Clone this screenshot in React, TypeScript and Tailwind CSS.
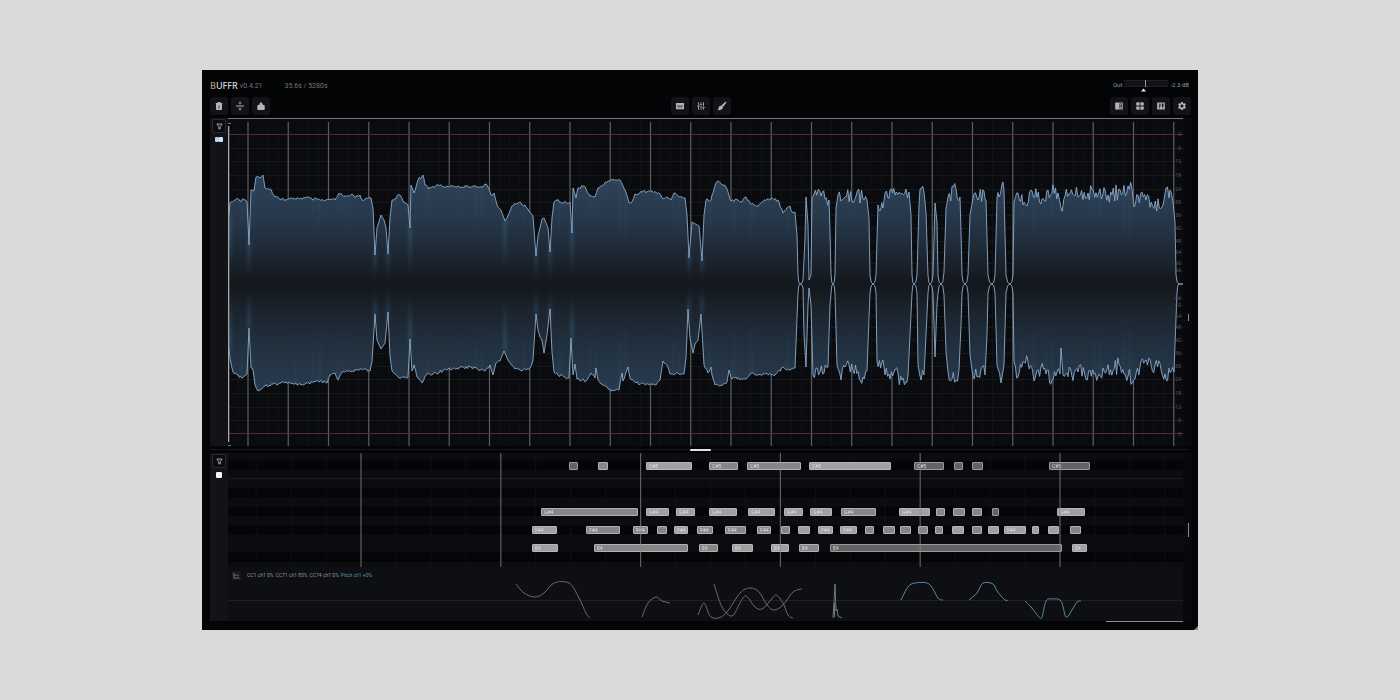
import type { ReactNode } from 'react';
import { MdSettings, MdTune, MdWindow } from 'react-icons/md';

type Point = [number, number];

const WAVE_W = 955;
const WAVE_H = 328;
const MID = 166;
const ROLL_H = 114;
const CC_H = 54;
const KEY_H = 9.2;

// upper edge of the waveform, in chart units
const upper: Point[] = [
  [0, 108], [2, 85], [7, 82], [17, 82], [19, 84], [21, 127], [23, 72], [26, 73], [28, 59], [32, 60], [35, 57], [37, 70],
  [42, 71], [47, 79], [57, 82], [77, 80], [80, 79], [84, 81], [107, 82], [111, 75], [117, 78], [124, 76], [128, 79],
  [132, 77], [134, 82], [138, 80], [143, 80], [145, 90], [147, 137], [149, 110], [153, 97], [156, 102], [158, 110],
  [160, 136], [162, 100], [164, 82], [172, 77], [175, 83], [180, 87], [182, 110], [183, 67], [186, 75], [190, 62],
  [195, 57], [197, 67], [201, 71], [210, 67], [220, 69], [254, 69], [257, 66], [260, 69], [263, 77], [266, 75],
  [269, 87], [273, 92], [277, 103], [279, 100], [284, 88], [290, 85], [297, 87], [302, 94], [305, 98], [308, 138],
  [310, 118], [312, 110], [314, 101], [316, 100], [318, 105], [320, 110], [322, 134], [324, 100], [326, 84], [329, 82],
  [334, 85], [342, 84], [344, 115], [345, 70], [348, 80], [350, 70], [356, 68], [362, 78], [367, 79], [370, 70],
  [380, 63], [385, 61], [392, 62], [397, 72], [401, 85], [404, 84], [407, 76], [414, 74], [424, 73], [432, 76],
  [434, 80], [440, 80], [443, 82], [446, 75], [454, 79], [457, 80], [459, 97], [461, 140], [464, 104], [471, 108],
  [474, 143], [476, 97], [478, 82], [483, 82], [485, 75], [488, 65], [490, 63], [498, 69], [503, 83], [510, 82],
  [514, 84], [518, 79], [522, 85], [530, 88], [539, 81], [550, 82], [555, 95], [562, 88], [564, 94], [567, 94],
  [569, 117], [570, 157], [572, 166], [575, 162], [577, 120], [578, 79], [580, 107], [581, 162], [583, 157], [584, 80],
  [586, 76], [593, 78], [601, 82], [602, 114], [603, 157], [605, 166], [607, 157], [608, 90], [610, 77], [617, 79],
  [628, 78], [639, 82], [641, 100], [642, 157], [645, 166], [648, 157], [650, 87], [655, 90], [657, 75], [660, 80],
  [662, 72], [667, 77], [678, 71], [681, 74], [683, 97], [684, 157], [686, 166], [689, 157], [691, 87], [692, 71],
  [696, 74], [698, 94], [700, 157], [702, 166], [705, 157], [707, 85], [709, 104], [710, 157], [713, 166], [716, 154],
  [718, 90], [720, 79], [728, 71], [732, 79], [733, 114], [734, 157], [737, 166], [740, 157], [742, 97], [745, 80],
  [750, 82], [756, 73], [758, 82], [760, 157], [764, 166], [767, 157], [769, 80], [771, 79], [774, 66], [776, 72],
  [778, 157], [782, 166], [785, 157], [786, 84], [790, 75], [795, 87], [799, 88], [804, 73], [814, 81], [820, 72],
  [830, 75], [833, 90], [837, 78], [860, 75], [880, 77], [904, 71], [906, 89], [914, 74], [918, 82], [934, 89],
  [938, 70], [941, 80], [943, 74], [945, 84], [947, 104], [948, 157], [951, 166], [955, 166],
];

// lower edge of the waveform
const lower: Point[] = [
  [0, 224], [2, 240], [5, 254], [14, 260], [19, 256], [21, 210], [23, 250], [25, 252], [27, 267], [30, 273], [37, 268],
  [57, 265], [77, 266], [92, 263], [99, 265], [102, 257], [107, 255], [110, 262], [114, 254], [123, 254], [133, 251],
  [142, 253], [144, 244], [147, 196], [149, 222], [153, 231], [157, 225], [160, 194], [162, 238], [164, 253],
  [172, 260], [180, 259], [182, 221], [184, 253], [186, 247], [189, 259], [194, 265], [198, 257], [205, 256],
  [220, 251], [242, 249], [257, 253], [262, 247], [265, 257], [268, 245], [272, 243], [276, 233], [280, 242],
  [287, 251], [295, 252], [302, 250], [305, 242], [308, 196], [310, 212], [312, 219], [314, 222], [316, 235],
  [319, 217], [322, 191], [324, 234], [326, 254], [330, 257], [341, 260], [343, 220], [345, 257], [347, 246],
  [349, 261], [358, 263], [363, 255], [367, 260], [368, 250], [370, 262], [375, 267], [383, 273], [391, 272],
  [394, 255], [395, 263], [400, 249], [402, 260], [408, 265], [428, 267], [432, 262], [435, 243], [439, 247],
  [442, 256], [456, 256], [458, 240], [460, 191], [462, 220], [465, 235], [467, 226], [470, 222], [473, 196],
  [476, 247], [480, 255], [483, 249], [484, 257], [487, 267], [493, 267], [499, 264], [501, 252], [503, 260],
  [518, 261], [522, 256], [547, 257], [555, 249], [562, 252], [567, 250], [569, 200], [570, 175], [572, 166],
  [575, 170], [576, 217], [578, 249], [580, 187], [581, 170], [583, 187], [585, 257], [592, 254], [600, 249],
  [602, 187], [603, 175], [605, 166], [607, 175], [609, 247], [613, 262], [617, 249], [625, 253], [635, 259],
  [639, 253], [641, 200], [642, 175], [645, 166], [648, 175], [649, 244], [655, 242], [657, 257], [666, 254],
  [674, 262], [680, 258], [682, 217], [684, 175], [686, 166], [689, 175], [690, 247], [693, 262], [696, 257],
  [698, 217], [700, 175], [702, 166], [705, 175], [707, 239], [709, 187], [710, 175], [713, 166], [716, 177],
  [718, 234], [720, 254], [728, 262], [731, 252], [733, 207], [734, 175], [737, 166], [740, 175], [742, 237],
  [745, 259], [753, 251], [757, 257], [759, 217], [760, 175], [764, 166], [767, 175], [769, 247], [773, 265],
  [776, 247], [778, 175], [782, 166], [785, 175], [786, 244], [790, 259], [796, 244], [800, 244], [806, 263],
  [813, 249], [818, 256], [824, 262], [829, 254], [832, 256], [833, 230], [835, 257], [850, 254], [870, 258],
  [885, 253], [891, 246], [896, 256], [907, 261], [912, 249], [927, 247], [937, 256], [946, 254], [948, 200],
  [949, 175], [951, 166], [955, 166],
];

// narrow dips with a soft glow between their two tips
const dips: Point[] = [
  [2, 105], [21, 127], [147, 137], [160, 136], [182, 110], [277, 103], [308, 138], [322, 134], [344, 115], [461, 140], [474, 143],
];

const dbMarks: [number, string][] = [
  [16, '0'], [30, '-6'], [43, '-12'], [57, '-18'], [71, '-24'], [84, '-30'],
  [97, '-36'], [110, '-42'], [123, '-48'], [134, '-54'], [145, '-60'], [152, '-66'],
];

const beats = Array.from({ length: 24 }, (_, i) => 20 + i * 40.25);
const bars = Array.from({ length: 6 }, (_, i) => 133 + i * 139.8);

const random = (n: number) => {
  const s = Math.sin(n * 127.1) * 43758.5453;
  return (s - Math.floor(s)) * 2 - 1;
};

// walks along the envelope, roughens its flat parts and rounds off the silences
const roughen = (points: Point[], seed: number): string => {
  const out: string[] = [];
  for (let i = 0; i < points.length - 1; i++) {
    const [x1, y1] = points[i];
    const [x2, y2] = points[i + 1];
    const loud = Math.abs(y1 - MID) > 70 && Math.abs(y2 - MID) > 70;
    const flat = Math.abs(y2 - y1) / (x2 - x1) < 6;
    const amount = loud && flat ? (x1 > 584 ? 8 : 1.4) : 0;
    out.push(`${x1},${y1}`);
    if (y2 === MID && y1 !== MID) {
      out.push(`${x1 + (x2 - x1) * 0.4},${MID + (y1 - MID) * 0.2}`);
      continue;
    }
    if (y1 === MID && y2 !== MID) {
      out.push(`${x1 + (x2 - x1) * 0.6},${MID + (y2 - MID) * 0.2}`);
      continue;
    }
    const steps = Math.max(1, Math.round((x2 - x1) / 1.3));
    for (let k = 1; k < steps; k++) {
      const x = x1 + ((x2 - x1) * k) / steps;
      const y = y1 + ((y2 - y1) * k) / steps + random(x + seed) * amount;
      out.push(`${x.toFixed(1)},${y.toFixed(1)}`);
    }
  }
  const last = points[points.length - 1];
  out.push(`${last[0]},${last[1]}`);
  return out.join(' ');
};

const smooth = (points: Point[]) => {
  let d = `M${points[0][0]} ${points[0][1]}`;
  for (let i = 0; i < points.length - 1; i++) {
    const p0 = points[i - 1] ?? points[i];
    const p1 = points[i];
    const p2 = points[i + 1];
    const p3 = points[i + 2] ?? p2;
    d += ` C${p1[0] + (p2[0] - p0[0]) / 6} ${p1[1] + (p2[1] - p0[1]) / 6} ${p2[0] - (p3[0] - p1[0]) / 6} ${p2[1] - (p3[1] - p1[1]) / 6} ${p2[0]} ${p2[1]}`;
  }
  return d;
};

const upperLine = roughen(upper, 3);
const lowerLine = roughen(lower, 11);

// [start, end, tone]
type Note = [number, number, 'dark' | 'mid' | 'light'];

const noteRows: { name: string; key: number; notes: Note[] }[] = [
  {
    name: 'C#5',
    key: 1,
    notes: [
      [341, 350, 'dark'], [370, 380, 'mid'], [418, 464, 'light'], [481, 510, 'mid'], [519, 573, 'mid'], [581, 663, 'light'],
      [686, 716, 'dark'], [726, 735, 'dark'], [744, 755, 'dark'], [821, 862, 'dark'],
    ],
  },
  {
    name: 'G#4',
    key: 6,
    notes: [
      [313, 410, 'mid'], [418, 441, 'light'], [448, 467, 'light'], [481, 509, 'light'], [520, 547, 'light'], [556, 575, 'light'],
      [582, 604, 'light'], [613, 648, 'mid'], [671, 702, 'light'], [708, 717, 'mid'], [725, 737, 'mid'], [744, 754, 'mid'],
      [764, 771, 'dark'], [829, 857, 'light'],
    ],
  },
  {
    name: 'F#4',
    key: 8,
    notes: [
      [304, 329, 'light'], [358, 392, 'mid'], [405, 420, 'mid'], [429, 439, 'mid'], [446, 460, 'light'], [469, 485, 'mid'],
      [497, 518, 'mid'], [529, 543, 'mid'], [553, 562, 'mid'], [570, 582, 'light'], [590, 605, 'light'], [612, 629, 'light'],
      [637, 646, 'mid'], [655, 667, 'mid'], [672, 683, 'mid'], [690, 700, 'mid'], [707, 715, 'mid'], [724, 736, 'light'],
      [744, 754, 'mid'], [760, 771, 'light'], [776, 798, 'light'], [804, 811, 'light'], [820, 831, 'light'], [842, 853, 'mid'],
    ],
  },
  {
    name: 'E4',
    key: 10,
    notes: [
      [304, 330, 'light'], [366, 460, 'mid'], [471, 490, 'mid'], [504, 525, 'light'], [543, 561, 'light'], [571, 591, 'mid'],
      [602, 834, 'dark'], [844, 859, 'light'],
    ],
  },
];

const noteTone = {
  dark: 'border-[#9a9a9c] bg-[#636365]',
  mid: 'border-[#b2b2b4] bg-[#868688]',
  light: 'border-[#b8b8ba] bg-[#a0a0a2]',
};

const blackKeys = [1, 4, 6, 8, 11];

const greyCurves: Point[][] = [
  [[288, 17], [296, 26], [307, 30], [316, 26], [326, 16], [341, 16], [350, 29], [358, 46], [362, 51]],
  [[414, 50], [420, 36], [428, 30], [434, 34], [442, 36]],
  [[470, 48], [476, 36], [482, 49], [490, 51], [499, 45], [512, 26], [522, 21], [531, 25], [539, 38], [546, 43], [555, 38], [565, 25], [574, 22]],
  [[486, 17], [494, 40], [504, 49], [512, 36], [518, 29], [527, 40], [534, 42], [542, 34], [548, 28], [555, 36], [560, 48], [565, 51]],
];

const blueCurves: Point[][] = [
  [[673, 33], [680, 20], [687, 16], [701, 17], [710, 31], [715, 33]],
  [[741, 33], [749, 26], [755, 16], [765, 17], [769, 24], [777, 33], [780, 33]],
  [[797, 34], [803, 40], [811, 50], [814, 50], [818, 34], [824, 32], [833, 34], [838, 50], [844, 43], [849, 35], [853, 34]],
];

const ToolButton = ({ label, children }: { label: string; children: ReactNode }) => (
  <button
    type="button"
    aria-label={label}
    className="flex size-[18px] items-center justify-center rounded-[3px] bg-[#121317] text-[10px] text-[#b4b4b6]"
  >
    {children}
  </button>
);

const Glyph = ({ children }: { children: ReactNode }) => (
  <svg viewBox="0 0 10 10" className="size-[10px]" fill="currentColor">
    {children}
  </svg>
);

const FilterButton = ({ label }: { label: string }) => (
  <button
    type="button"
    aria-label={label}
    className="flex size-[14px] items-center justify-center rounded-[2px] border border-[#292a2e] bg-[#0b0c0f]"
  >
    <svg viewBox="0 0 8 8" className="size-[7px]" fill="none" stroke="#b8b8ba" strokeWidth="1">
      <path d="M1 1.2h6L4.8 4.2v2.6h-1.6V4.2z" />
    </svg>
  </button>
);

const Header = () => (
  <header className="flex flex-col gap-[3px] pr-[7px] pl-2">
    <div className="flex h-4 items-center justify-between pr-[2px]">
      <div className="flex items-center text-[7px] text-[#77787a]">
        <h1 className="font-['Noto_Sans',sans-serif] text-[9px] font-medium text-[#d6d6d8]">
          <span className="text-[#b79a5c]">B</span>UFFR
        </h1>
        <span className="ml-[2px]">v0.4.21</span>
        <span className="ml-[22px]">35.6s / 5280s</span>
      </div>
      <div className="flex h-4 items-start gap-[2px] text-[6px] text-[#9b9b9d]">
        <label htmlFor="output" className="leading-[14px]">Out</label>
        <div className="relative mt-[2px] h-[7px] w-[44px] rounded-[1px] bg-[#111216]">
          <input id="output" type="range" min={-60} max={60} defaultValue={-2.3} className="absolute inset-0 h-full w-full opacity-0" />
          <svg viewBox="0 0 44 12" className="pointer-events-none h-[12px] w-[44px]">
            <path d="M0 .5h44M0 6.500h44" stroke="#1d1f23" />
            <path d="M21.500 0v7" stroke="#9a9a9c" />
            <path d="M17 11.500 19.500 8.500 22 11.500z" fill="#f0f0f0" />
          </svg>
        </div>
        <output className="leading-[14px]">-2.3 dB</output>
      </div>
    </div>
    <nav className="grid grid-cols-3">
      <div className="flex gap-[3px]">
        <ToolButton label="Clear">
          <Glyph>
            <path d="M3.500 1h3v1h1.800v1H1.700V2h1.800z" />
            <path fillRule="evenodd" d="M2 3h6v5.300a.7.7 0 0 1-.7.7H2.700a.7.7 0 0 1-.7-.7zM4 4.500v3.200h.3V4.500zM5.700 4.500v3.200H6V4.500z" />
          </Glyph>
        </ToolButton>
        <ToolButton label="Fit height">
          <Glyph>
            <path d="M1 4.600h8v.8H1zM5 .4l1.500 1.900H5.400v1.200h-.8V2.300H3.500zM5 9.600 3.500 7.700h1.100V6.500h.8v1.200h1.100z" />
          </Glyph>
        </ToolButton>
        <ToolButton label="Export">
          <Glyph>
            <path d="M2 4h6a.7.7 0 0 1 .7.7v3.600a.7.7 0 0 1-.7.7H2a.7.7 0 0 1-.7-.7V4.700A.7.7 0 0 1 2 4z" />
            <path d="M3.200 4.200V3L5 1l1.800 2v1.200z" />
          </Glyph>
        </ToolButton>
      </div>
      <div className="flex justify-center gap-[3px]">
        <ToolButton label="Info">
          <Glyph>
            <path fillRule="evenodd" d="M1 2h8v6.300H1zM2.200 4.200v.6h1.300v-.6zM4.300 4.200v.6h1.300v-.6zM6.400 4.200v.6h1.300v-.6zM2.200 5.600v.6h5.500v-.6z" />
          </Glyph>
        </ToolButton>
        <ToolButton label="Mixer"><MdTune className="rotate-90" /></ToolButton>
        <ToolButton label="Brush">
          <Glyph>
            <path d="M9.100 1c.4.3.4.700.1 1L6.200 5.800 4.500 4.300 8.200 1c.2-.3.600-.3.900 0z" />
            <path d="M4 4.400c1.200.1 2 .9 2 1.900C5.700 8.400 3.500 9.500.8 9.200c.9-.7.500-1.900 1.100-3.100.4-.9 1.100-1.600 2.100-1.700z" />
          </Glyph>
        </ToolButton>
      </div>
      <div className="flex justify-end gap-[3px]">
        <ToolButton label="Side panel">
          <Glyph>
            <path fillRule="evenodd" d="M1.200 1.500h7.600v7H1.200zM5.400 2.500v5h2.500v-5z" />
            <path d="M5.800 3.200h1.600v.9H5.800zM5.800 4.600h1.600v.9H5.800zM5.800 6h1.600v.9H5.800z" />
          </Glyph>
        </ToolButton>
        <ToolButton label="Grid"><MdWindow /></ToolButton>
        <ToolButton label="Piano roll">
          <Glyph>
            <path fillRule="evenodd" d="M1.200 1.500h7.600v7H1.200zM3.300 2.500v2.700h-.6v.6h.7v2h.5v-2h.6V2.500zM5.900 2.500v3.300h.5v2h.5v-2h.6V2.500z" />
          </Glyph>
        </ToolButton>
        <ToolButton label="Settings"><MdSettings /></ToolButton>
      </div>
    </nav>
  </header>
);

const Waveform = () => (
  <svg viewBox={`0 0 ${WAVE_W} ${WAVE_H}`} preserveAspectRatio="none" className="absolute inset-0 h-full w-full">
    <defs>
      <linearGradient id="body" gradientUnits="userSpaceOnUse" x1="0" y1="56" x2="0" y2="276">
        <stop offset="0" stopColor="#30435a" />
        <stop offset=".2" stopColor="#27384a" />
        <stop offset=".36" stopColor="#1d2733" />
        <stop offset=".5" stopColor="#14171c" />
        <stop offset=".64" stopColor="#1c252f" />
        <stop offset=".8" stopColor="#223140" />
        <stop offset="1" stopColor="#293b4f" />
      </linearGradient>
      <linearGradient id="glow" x1="0" y1="0" x2="0" y2="1">
        <stop offset="0" stopColor="#4f87b8" stopOpacity=".3" />
        <stop offset=".4" stopColor="#4f87b8" stopOpacity="0" />
        <stop offset=".6" stopColor="#4f87b8" stopOpacity="0" />
        <stop offset="1" stopColor="#4f87b8" stopOpacity=".3" />
      </linearGradient>
      <filter id="soften" x="-5%" y="-5%" width="110%" height="110%">
        <feGaussianBlur stdDeviation="1.6 4" />
      </filter>
      <clipPath id="shape">
        <polygon points={`${upperLine} ${lowerLine.split(' ').reverse().join(' ')}`} />
      </clipPath>
    </defs>

    {Array.from({ length: 95 }, (_, i) => (
      <path key={i} d={`M${i * 10.06 + 10} 4V${WAVE_H}`} stroke="#101216" />
    ))}
    {dbMarks.slice(1).map(([y]) => (
      <path key={y} d={`M0 ${y + 0.5}H${WAVE_W}M0 ${2 * MID - y + 0.5}H${WAVE_W}`} stroke="#16181c" />
    ))}
    {beats.map((x) => (
      <path key={x} d={`M${x} 4V${WAVE_H}`} stroke="#5c5d60" strokeWidth="1.2" />
    ))}
    <path d={`M0 16.500H${WAVE_W}M0 315.500H${WAVE_W}`} stroke="#5a2a34" />

    <g clipPath="url(#shape)">
      <rect width={WAVE_W} height={WAVE_H} fill="url(#body)" />
      <g filter="url(#soften)">
        {Array.from({ length: 160 }, (_, i) => (
          <rect key={i} x={i * 6} y="60" width="3" height="212" fill="url(#glow)" opacity={Math.max(0, random(i)) * 0.4} />
        ))}
        {dips.map(([x, y]) => (
          <rect key={x} x={x - 2} y={y - 4} width="4" height={2 * (MID - y + 4)} fill="url(#glow)" />
        ))}
      </g>
    </g>
    <polyline points={upperLine} fill="none" stroke="#8aaccb" strokeWidth=".9" strokeLinejoin="round" />
    <polyline points={lowerLine} fill="none" stroke="#8aaccb" strokeWidth=".9" strokeLinejoin="round" />

    <path d={`M0 .5H${WAVE_W}`} stroke="#77787a" />
    <path d="M.5 8V324" stroke="#a8a8aa" strokeWidth="1.6" />
    <path d="M0 5.500H3M0 327.500H3" stroke="#77787a" />
  </svg>
);

const PianoRoll = () => (
  <div className="relative h-[114px] overflow-hidden bg-[#0b0c0f]">
    <svg viewBox={`0 0 ${WAVE_W} ${ROLL_H}`} preserveAspectRatio="none" className="absolute inset-0 h-full w-full">
      {blackKeys.map((key) => (
        <rect key={key} x="0" y={key * KEY_H - 1.5} width={WAVE_W} height={KEY_H} fill="#040507" />
      ))}
      {Array.from({ length: 27 }, (_, i) => (
        <path key={i} d={`M${28.15 + i * 34.95} 0V${ROLL_H}`} stroke="#0f1115" />
      ))}
      <path d={`M0 25.500H${WAVE_W}`} stroke="#1a1c20" />
    </svg>
    {noteRows.map((row) =>
      row.notes.map(([start, end, tone]) => (
        <div
          key={`${row.name}-${start}`}
          className={`absolute h-2 overflow-hidden rounded-[1px] border pl-[2px] text-[5px] leading-[6px] text-[#dededf] ${noteTone[tone]}`}
          style={{
            left: `${(start / WAVE_W) * 100}%`,
            width: `${((end - start) / WAVE_W) * 100}%`,
            top: `${((row.key * KEY_H - 0.6) / ROLL_H) * 100}%`,
          }}
        >
          {end - start > 13 && row.name}
        </div>
      )),
    )}
    <svg viewBox={`0 0 ${WAVE_W} ${ROLL_H}`} preserveAspectRatio="none" className="pointer-events-none absolute inset-0 h-full w-full">
      {bars.map((x) => (
        <path key={x} d={`M${x} 0V${ROLL_H}`} stroke="#8a8a8c" strokeOpacity=".65" strokeWidth="1.2" />
      ))}
    </svg>
  </div>
);

const Automation = () => (
  <div className="relative h-[54px] bg-[#0d0f12]">
    <svg viewBox={`0 0 ${WAVE_W} ${CC_H}`} preserveAspectRatio="none" className="absolute inset-0 h-full w-full" fill="none">
      <path d={`M0 33.500H${WAVE_W}`} stroke="#1e2024" />
      {greyCurves.map((points, i) => (
        <path key={i} d={smooth(points)} stroke="#6b6c70" />
      ))}
      <path d="M605 51 607 17 608 44 609 42 610 49 614 51M606.500 50V36" stroke="#75858b" strokeWidth=".9" />
      {blueCurves.map((points, i) => (
        <path key={i} d={smooth(points)} stroke="#558ea8" />
      ))}
    </svg>
    <div className="relative flex items-center gap-[2px] pt-[4px] pl-1 text-[5px] leading-[9px] text-[#97989a]">
      <button type="button" aria-label="Automation lanes" className="mr-1 flex size-[9px] items-center justify-center bg-[#16181b]">
        <svg viewBox="0 0 8 8" className="size-[7px]" fill="none" stroke="#98989a" strokeWidth=".8">
          <path d="M1 1v6h6.500M1.500 4.500 3 3l2 1.500L7 3" />
        </svg>
      </button>
      <span>CC1 ch1 0%</span>
      <span>CC71 ch1 83%</span>
      <span>CC74 ch1 0%</span>
      <span className="text-[#4f9dbb]">Pitch ch1 +0%</span>
    </div>
  </div>
);

export default function App() {
  return (
    <main className="flex min-h-screen bg-[#d9d9d9] px-[202px] py-[70px] font-['Roboto','Noto_Sans',sans-serif]">
      <div className="relative flex min-w-0 flex-1 flex-col bg-[#030406] pt-2">
        <Header />

        <section className="mt-[3px] flex min-h-[240px] flex-1 pl-2">
          <aside className="flex w-[18px] shrink-0 flex-col items-center gap-[4px] bg-[#111317] pt-[1px]">
            <FilterButton label="Filter audio tracks" />
            <div className="flex">
              <span className="h-[5px] w-[4px] rounded-[1px] bg-[#b3d3ee]" />
              <span className="h-[5px] w-[4px] rounded-[1px] bg-[#cfe4f5]" />
            </div>
          </aside>
          <div className="relative min-w-0 flex-1 bg-[#0a0b0e]">
            <Waveform />
            {dbMarks.map(([y, label]) => (
              <div key={label} className={`text-[5px] leading-[6px] ${label === '0' ? 'text-[#7a3440]' : 'text-[#55565a]'}`}>
                <span className="absolute right-[2px] -translate-y-1/2" style={{ top: `${(y / WAVE_H) * 100}%` }}>
                  {label}
                </span>
                <span className="absolute right-[2px] -translate-y-1/2" style={{ top: `${((2 * MID - y) / WAVE_H) * 100}%` }}>
                  {label}
                </span>
              </div>
            ))}
          </div>
          <div className="flex w-[15px] shrink-0 items-center">
            <div className="flex h-full w-[9px] items-center justify-end bg-[#08090c] pr-[3px]">
              <span className="mt-[70px] h-[7px] w-px bg-[#8a8a8c]" />
            </div>
          </div>
        </section>

        <div className="mx-2 flex h-[7px] items-center justify-center bg-[linear-gradient(#17191c,#17191c)] bg-[length:100%_1px] bg-center bg-no-repeat">
          <span className="h-[2px] w-[21px] rounded-full bg-[#e4e4e6]" />
        </div>

        <section className="flex pl-2">
          <aside className="flex w-[18px] shrink-0 flex-col items-center gap-[4px] bg-[#111317] pt-[1px]">
            <FilterButton label="Filter MIDI tracks" />
            <span className="size-[6px] rounded-[1px] bg-[#f4f4f4]" />
          </aside>
          <div className="min-w-0 flex-1">
            <PianoRoll />
            <Automation />
          </div>
          <div className="flex w-[15px] shrink-0">
            <div className="flex w-[9px] justify-end bg-[#08090c] pr-[3px]">
              <span className="mt-[70px] h-[14px] w-px bg-[#8a8a8c]" />
            </div>
          </div>
        </section>

        <footer className="flex h-[9px] justify-end pr-[15px]">
          <span className="h-px w-[77px] bg-[#8a8a8c]" />
        </footer>
        <svg viewBox="0 0 4 4" className="absolute right-0 bottom-0 size-[4px]">
          <path d="M4 0v4H0z" fill="#8a8a8c" />
        </svg>
      </div>
    </main>
  );
}
